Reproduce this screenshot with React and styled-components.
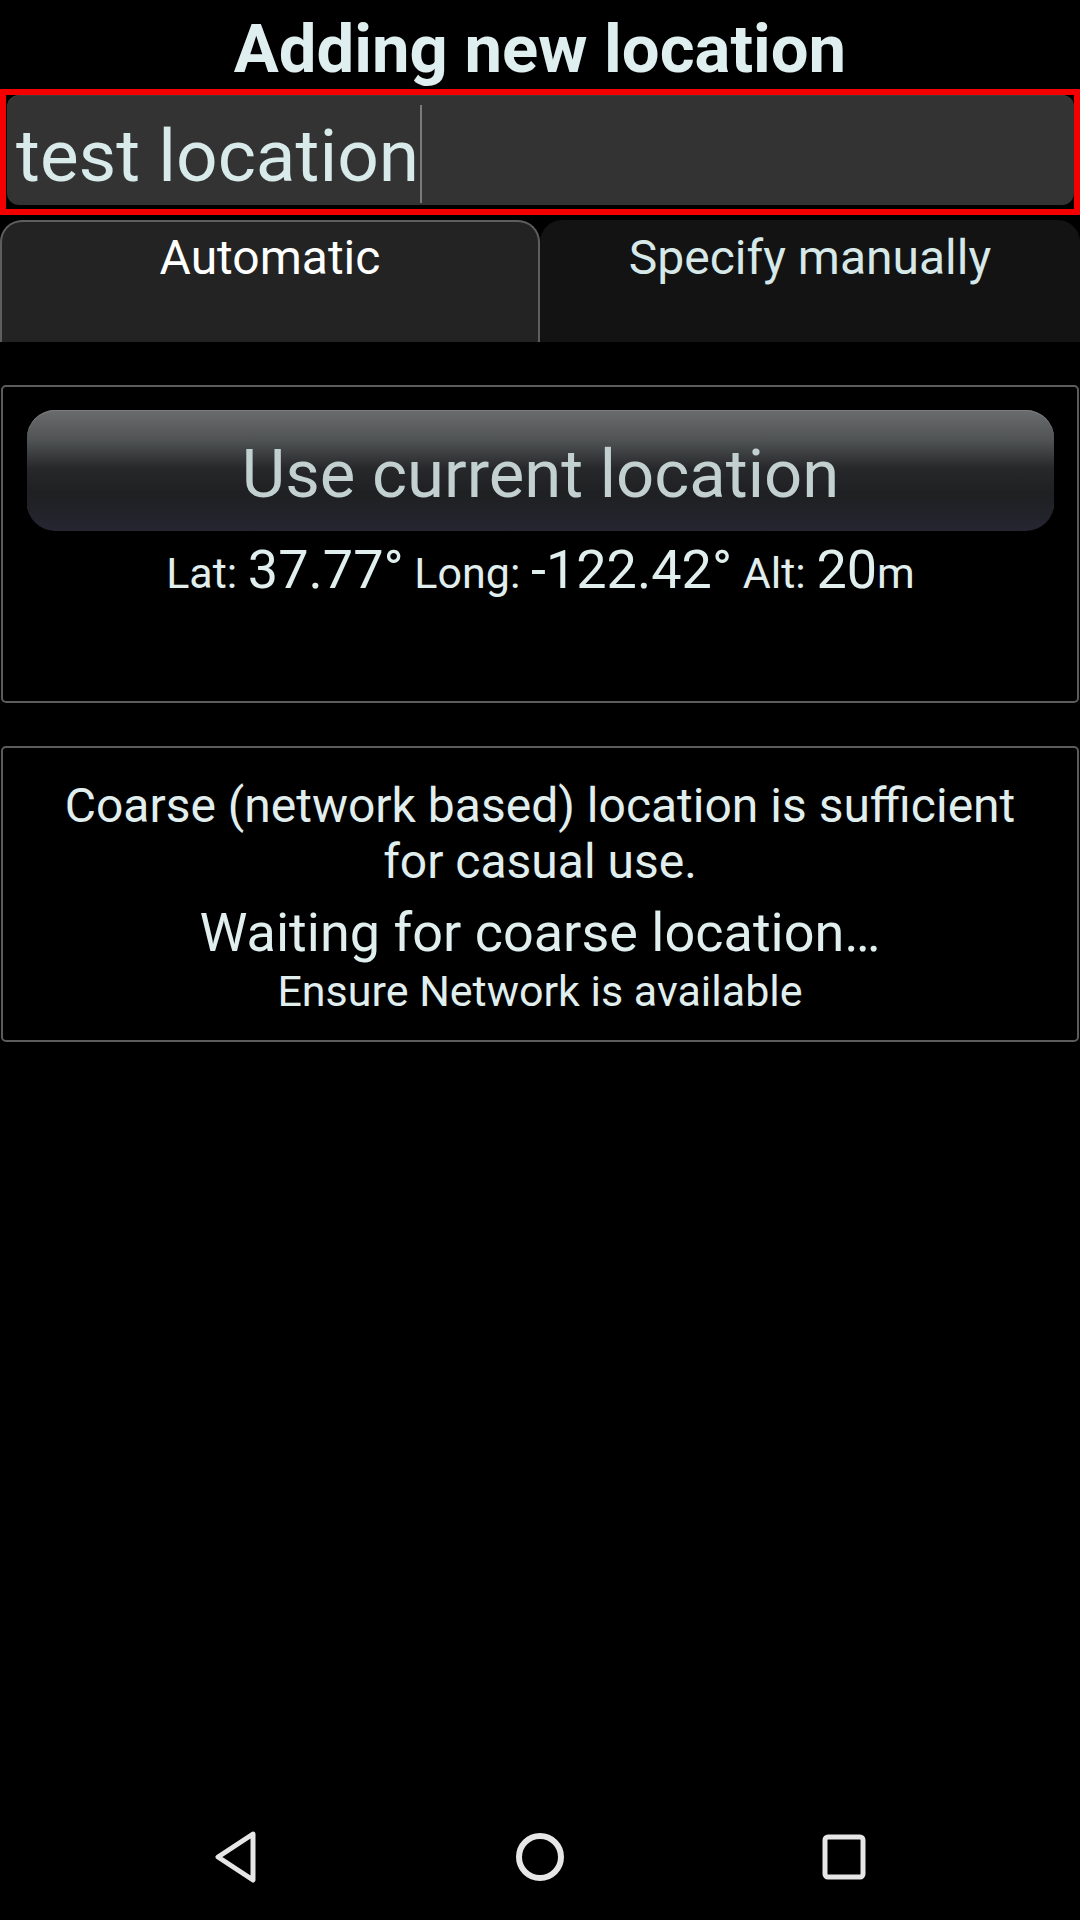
import React from "react";
import styled, { createGlobalStyle } from "styled-components";

const GlobalStyle = createGlobalStyle`
  html, body { margin: 0; padding: 0; background: #000; }
  body { font-family: Roboto, "Noto Sans", "Liberation Sans", sans-serif; }
  * { box-sizing: border-box; }
`;

const Screen = styled.div`
  width: 1080px;
  height: 1920px;
  background: #000;
  display: flex;
  flex-direction: column;
  overflow: hidden;
`;

const Title = styled.h1`
  margin: 0;
  padding-top: 9px;
  height: 89px;
  font-weight: 700;
  font-size: 67px;
  line-height: 80px;
  text-align: center;
  color: #dfeeee;
`;

const NameFrame = styled.div`
  height: 126px;
  border: 6px solid #f40000;
  padding: 0 0 4px 1px;
`;

const NameInput = styled.div`
  height: 110px;
  background: #333333;
  border-radius: 12px;
  box-shadow: inset 0 1px 0 #3c3c3c;
  display: flex;
  align-items: flex-start;
  padding-left: 9px;
`;

const InputText = styled.span`
  margin-top: 18px;
  font-size: 73px;
  line-height: 87px;
  color: #d9eaea;
  white-space: pre;
`;

const Caret = styled.span`
  width: 2px;
  height: 98px;
  margin-top: 10px;
  margin-left: 1px;
  background: #7a7a7a;
`;

const Tabs = styled.div`
  margin-top: 5px;
  height: 122px;
  display: grid;
  grid-template-columns: 540px 540px;
`;

const Tab = styled.div`
  border-radius: 22px 22px 0 0;
  border: 2px solid ${(p) => (p.$active ? "#5e5e5e" : "transparent")};
  border-bottom: none;
  background: ${(p) => (p.$active ? "#232323" : "#131313")};
  color: ${(p) => (p.$active ? "#ffffff" : "#d6e8e8")};
  padding-top: 8px;
  font-size: 48px;
  line-height: 56px;
  text-align: center;
`;

const Panel = styled.div`
  margin: 43px 1px 0;
  border: 2px solid #5c5c5c;
  border-radius: 5px;
  padding: ${(p) => p.$pad};
  text-align: center;
`;

const CurrentButton = styled.div`
  height: 121px;
  border-radius: 28px;
  background: linear-gradient(
    to bottom,
    #6a6c6d 0%,
    #505354 25%,
    #262829 48%,
    #1e2021 68%,
    #262532 100%
  );
  box-shadow: inset 0 1px 0 #7a7c7d;
  display: flex;
  align-items: center;
  justify-content: center;
  padding-top: 6px;
  font-size: 67px;
  line-height: 80px;
  color: #c3d0d0;
`;

const Coords = styled.div`
  margin-top: 7px;
  font-size: 43px;
  color: #e0eeee;
  white-space: pre;
`;

const Big = styled.span`
  font-size: 54px;
`;

const Note = styled.p`
  margin: ${(p) => p.$m || 0};
  font-size: ${(p) => p.$size}px;
  line-height: ${(p) => p.$lh}px;
  color: #e0eeee;
`;

const NavBar = styled.div`
  margin-top: auto;
  height: 126px;
  display: flex;
  justify-content: center;
  align-items: center;
`;

const NavButton = styled.div`
  width: 304px;
  display: flex;
  justify-content: center;
  align-items: center;
`;

export default function App() {
  return (
    <>
      <GlobalStyle />
      <Screen>
        <Title>Adding new location</Title>
        <NameFrame>
          <NameInput>
            <InputText>test location</InputText>
            <Caret />
          </NameInput>
        </NameFrame>
        <Tabs>
          <Tab $active>Automatic</Tab>
          <Tab>Specify manually</Tab>
        </Tabs>
        <Panel $pad="23px 23px 100px 24px">
          <CurrentButton>Use current location</CurrentButton>
          <Coords>
            {"Lat: "}
            <Big>37.77°</Big>
            {" Long: "}
            <Big>-122.42°</Big>
            {" Alt: "}
            <Big>20</Big>
            {"m"}
          </Coords>
        </Panel>
        <Panel $pad="30px 40px 23px">
          <Note $size={48} $lh={56}>
            Coarse (network based) location is sufficient for casual use.
          </Note>
          <Note $size={54} $lh={63} $m="11px 0 0">
            Waiting for coarse location…
          </Note>
          <Note $size={43} $lh={52} $m="1px 0 0">
            Ensure Network is available
          </Note>
        </Panel>
        <NavBar>
          <NavButton>
            <svg width="44" height="52" viewBox="0 0 44 52">
              <path
                d="M39 3 L4 26 L39 49 Z"
                fill="none"
                stroke="#e6e6e6"
                strokeWidth="5"
                strokeLinejoin="round"
              />
            </svg>
          </NavButton>
          <NavButton>
            <svg width="52" height="52" viewBox="0 0 52 52">
              <circle cx="26" cy="26" r="21" fill="none" stroke="#e6e6e6" strokeWidth="6" />
            </svg>
          </NavButton>
          <NavButton>
            <svg width="48" height="48" viewBox="0 0 48 48">
              <rect
                x="5"
                y="4"
                width="38"
                height="40"
                rx="3"
                fill="none"
                stroke="#e6e6e6"
                strokeWidth="5"
              />
            </svg>
          </NavButton>
        </NavBar>
      </Screen>
    </>
  );
}
